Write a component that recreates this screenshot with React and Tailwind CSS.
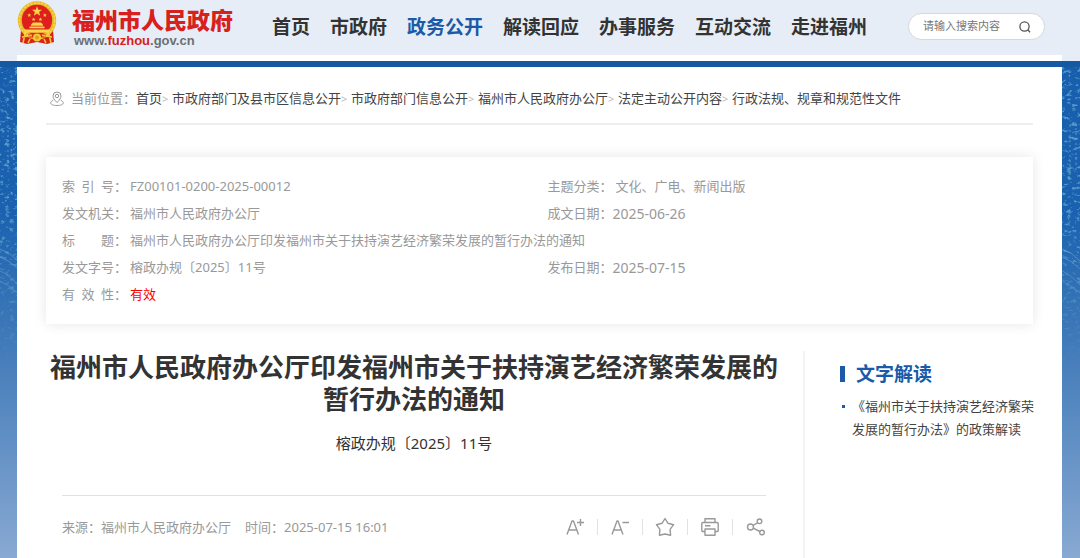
const navItems = [
  '首页',
  '市政府',
  '政务公开',
  '解读回应',
  '办事服务',
  '互动交流',
  '走进福州',
]

const crumbs = [
  '首页',
  '市政府部门及县市区信息公开',
  '市政府部门信息公开',
  '福州市人民政府办公厅',
  '法定主动公开内容',
  '行政法规、规章和规范性文件',
]

function Emblem() {
  return (
    <svg width="40" height="44" viewBox="0 0 40 44" aria-hidden="true" className="shrink-0">
      <path d="M4 29 L3 41 L10 43 L20 41 L30 43 L37 41 L36 29 Z" fill="#d9201c" />
      <circle cx="20" cy="19.5" r="19.2" fill="#e8b828" />
      <circle cx="20" cy="19.5" r="17.6" fill="none" stroke="#f6d84c" strokeWidth="1.6" strokeDasharray="2.4 1.2" />
      <circle cx="20" cy="19" r="15.2" fill="#df1f1d" />
      <path d="M20 5.2l1.3 3.5 3.7.1-2.9 2.3 1 3.6-3.1-2.1-3.1 2.1 1-3.6-2.9-2.3 3.7-.1z" fill="#f8d648" />
      <g fill="#f8d648">
        <path d="M12.2 12.2l.6 1.3 1.4.1-1.1.9.4 1.4-1.3-.8-1.2.8.4-1.4-1.1-.9 1.4-.1z" />
        <path d="M27.8 12.2l.6 1.3 1.4.1-1.1.9.4 1.4-1.3-.8-1.2.8.4-1.4-1.1-.9 1.4-.1z" />
        <path d="M16.6 16.4l.6 1.3 1.4.1-1.1.9.4 1.4-1.3-.8-1.2.8.4-1.4-1.1-.9 1.4-.1z" />
        <path d="M23.4 16.4l.6 1.3 1.4.1-1.1.9.4 1.4-1.3-.8-1.2.8.4-1.4-1.1-.9 1.4-.1z" />
        <path d="M14 23.5l2-2h8l2 2v1.3H14z" />
        <path d="M12.5 25.5h15v1.8h-15z" />
        <path d="M6.5 28.4h27l-1.6 3.4H8.1z" />
      </g>
      <path d="M11 33.5h18v3H11z" fill="#df1f1d" />
      <circle cx="20" cy="36.4" r="4" fill="#f3c93a" />
      <circle cx="20" cy="36.4" r="2" fill="#e0a21d" />
      <path d="M5 36l10-1.5M25 34.5L35 36M8 33l-2 9M32 33l2 9M13 38l-2 4M27 38l2 4" fill="none" stroke="#f3c93a" strokeWidth="1.6" />
    </svg>
  )
}

function SideScene({ id, seed, className }) {
  return (
    <svg width="100%" height="100%" aria-hidden="true" className={className}>
      <defs>
        <linearGradient id={`${id}-sky`} x1="0" y1="0" x2="0" y2="1">
          <stop offset="0" stopColor="#175fac" />
          <stop offset="0.3" stopColor="#1a62b0" />
          <stop offset="0.55" stopColor="#3f79b8" />
          <stop offset="1" stopColor="#88a9d2" />
        </linearGradient>
        <linearGradient id={`${id}-fade`} x1="0" y1="0" x2="0" y2="1">
          <stop offset="0" stopColor="#fff" />
          <stop offset="0.3" stopColor="#fff" />
          <stop offset="0.62" stopColor="#000" />
        </linearGradient>
        <mask id={`${id}-mask`}>
          <rect width="100%" height="100%" fill={`url(#${id}-fade)`} />
        </mask>
        <filter id={`${id}-grain`} x="0" y="0" width="100%" height="100%">
          <feTurbulence type="fractalNoise" baseFrequency="0.2 0.3" numOctaves="4" seed={seed} />
          <feColorMatrix values="0 0 0 0 0.3  0 0 0 0 0.66  0 0 0 0 0.82  5 0 0 0 -2.8" />
        </filter>
      </defs>
      <rect width="100%" height="100%" fill={`url(#${id}-sky)`} />
      <g mask={`url(#${id}-mask)`}>
        <rect width="100%" height="100%" filter={`url(#${id}-grain)`} opacity="0.5" />
        <g fill="none" stroke="#8ec3e4" opacity="0.55">
          <path d="M0 182q10 3 18 12M0 190q9 3 18 12M0 204q8 3 18 14M0 214q9 4 18 12" />
          <path d="M8 58v50M14 56v50" strokeDasharray="2 3" />
        </g>
      </g>
    </svg>
  )
}

function InfoItem({ label, children, className = '' }) {
  return (
    <div className={`flex ${className}`}>
      <dt className="flex shrink-0">
        <span className="w-[52px] [text-align-last:justify]">{label}</span>：
      </dt>
      <dd>{children}</dd>
    </div>
  )
}

function ToolButton({ label, children }) {
  return (
    <button type="button" aria-label={label} className="flex h-4 w-[45px] items-center justify-center">
      <svg
        width="20"
        height="20"
        viewBox="0 0 20 20"
        fill="none"
        stroke="#999"
        strokeWidth="1.4"
        strokeLinejoin="round"
        className="shrink-0"
      >
        {children}
      </svg>
    </button>
  )
}

export default function App() {
  return (
    <div className="flex min-h-screen flex-col bg-white font-['Noto_Sans','Noto_Sans_CJK_SC',sans-serif] text-[13px] text-[#333]">
      {/* HEADER */}
      <header className="bg-[#e6edf6]">
        <div className="flex h-[55px] items-start pr-[35px] pl-[17px]">
          <a href="#" className="flex items-start gap-[15px] pt-px">
            <Emblem />
            <span className="flex w-[162px] flex-col pt-[3px]">
              <span className="font-['Noto_Sans_CJK_SC',sans-serif] text-[23px] leading-[30px] font-black text-[#d8201c]">
                福州市人民政府
              </span>
              <span className="pl-[2px] font-['Liberation_Sans',sans-serif] text-[13px] leading-[14px] font-bold text-[#6b6f73]">
                www.<span className="text-[#d8201c]">fuzhou</span>.gov.cn
              </span>
            </span>
          </a>
          <nav className="ml-[38px] flex h-[54px] items-center gap-5 text-[19px] font-bold whitespace-nowrap">
            {navItems.map((item) => (
              <a key={item} href="#" className={item === '政务公开' ? 'text-[#1a5aa8]' : ''}>
                {item}
              </a>
            ))}
          </nav>
          <form className="mt-[13px] ml-auto flex h-[27px] w-[137px] items-center rounded-full border border-[#d5d8dc] bg-white pr-3 pl-[14px]">
            <input
              type="text"
              aria-label="搜索"
              placeholder="请输入搜索内容"
              className="min-w-0 flex-1 text-[11px] outline-none placeholder:text-[#777]"
            />
            <button type="button" aria-label="搜索">
              <svg width="14" height="14" viewBox="0 0 14 14" fill="none" stroke="#555" strokeWidth="1.3">
                <circle cx="6.5" cy="6.5" r="4.6" />
                <path d="M9.8 9.8l2.2 2.4" />
              </svg>
            </button>
          </form>
        </div>
        <div className="mr-[18px] ml-[17px] h-[6px] bg-white" />
        <div className="h-[6px] bg-[#1559a3]" />
      </header>

      <div className="flex flex-1">
        <div className="relative w-[17px] shrink-0">
          <SideScene id="left" seed="4" className="absolute inset-0" />
        </div>

        <main className="flex min-w-0 flex-1 flex-col px-[29px]">
          {/* BREADCRUMB */}
          <nav className="flex items-center border-b-2 border-[#eee] pt-[21px] pb-[14px] pl-1 leading-[21px] whitespace-nowrap">
            <svg width="14" height="16" viewBox="0 0 14 16" fill="none" stroke="#999" aria-hidden="true">
              <path d="M7 11.500C4.600 9 3 7.200 3 5a4 4 0 0 1 8 0C11 7.200 9.400 9 7 11.500z" />
              <circle cx="7" cy="5" r="1.700" />
              <path d="M3.300 9.200C1.500 10 .7 11 .7 12c0 1.600 2.800 2.500 6.300 2.500s6.300-.9 6.300-2.500c0-1-.8-2-2.600-2.800" />
            </svg>
            <span className="ml-[7px] text-[#999]">当前位置：</span>
            {crumbs.map((crumb, i) => (
              <span key={crumb} className="flex">
                <a href="#" className="text-[#444]">{crumb}</a>
                {i < crumbs.length - 1 && (
                  <span className="w-[10px] text-[11px] text-[#bbb]">&gt;</span>
                )}
              </span>
            ))}
          </nav>

          {/* DOCUMENT INFO */}
          <dl className="mt-8 grid auto-rows-[27px] grid-cols-[61fr_59fr] bg-white px-4 py-4 leading-[27px] text-[#999] shadow-[0_0_12px_rgba(0,0,0,0.1)]">
            <InfoItem label="索引号">
              <span className="ml-[3px]">FZ00101-0200-2025-00012</span>
            </InfoItem>
            <InfoItem label="主题分类">
              <span className="ml-[3px]">文化、广电、新闻出版</span>
            </InfoItem>
            <InfoItem label="发文机关">
              <span className="ml-[3px]">福州市人民政府办公厅</span>
            </InfoItem>
            <InfoItem label="成文日期">
              <span className="block text-sm leading-[27px]">2025-06-26</span>
            </InfoItem>
            <InfoItem label="标题" className="col-span-2">
              <span className="ml-[3px]">
                福州市人民政府办公厅印发福州市关于扶持演艺经济繁荣发展的暂行办法的通知
              </span>
            </InfoItem>
            <InfoItem label="发文字号">
              <span className="ml-[3px]">榕政办规〔2025〕11号</span>
            </InfoItem>
            <InfoItem label="发布日期">
              <span className="block text-sm leading-[27px]">2025-07-15</span>
            </InfoItem>
            <InfoItem label="有效性">
              <span className="ml-[3px] text-[#f00]">有效</span>
            </InfoItem>
          </dl>

          <div className="mt-[27px] flex flex-1">
            {/* ARTICLE */}
            <article className="min-w-0 flex-1 pr-[21px]">
              <h1 className="text-center text-[26px] leading-8 font-bold">
                福州市人民政府办公厅印发福州市关于扶持演艺经济繁荣发展的暂行办法的通知
              </h1>
              <p className="mt-4 text-center text-[15px] leading-6">榕政办规〔2025〕11号</p>
              <div className="mx-4 mt-10 flex items-center justify-between border-t border-[#e2e2e2] pt-[19px] whitespace-nowrap text-[#999]">
                <div className="flex items-center gap-[14px] leading-6">
                  <span>来源：福州市人民政府办公厅</span>
                  <span>时间：2025-07-15 16:01</span>
                </div>
                <div className="-mr-3 flex items-center divide-x divide-[#e2e2e2]">
                  <ToolButton label="放大字体">
                    <path d="M2 17.500L7 4h1.500L13.500 17.500M4 13h7.500M12 5.500h7M15.500 2v7" />
                  </ToolButton>
                  <ToolButton label="缩小字体">
                    <path d="M2 17.500L7 4h1L13 17.500M4 13h7.500M12.500 5.500h6.500" />
                  </ToolButton>
                  <ToolButton label="收藏">
                    <path d="M10 1.500l3 4.800 5.600 1.400-3.500 4.600.5 5.900-5.600-1.200-5.600 1.200.5-5.900L1.400 7.700 7 6.300z" />
                  </ToolButton>
                  <ToolButton label="打印">
                    <path d="M5 5.500V1.800h10v3.700M5 14.500H2.800a1 1 0 0 1-1-1v-7a1 1 0 0 1 1-1h14.400a1 1 0 0 1 1 1v7a1 1 0 0 1-1 1H15M5 12h10v6.200H5zM5 8.700h5.500" />
                  </ToolButton>
                  <ToolButton label="分享">
                    <circle cx="4.500" cy="10" r="3" />
                    <circle cx="13.500" cy="4.300" r="2.300" />
                    <circle cx="16" cy="15.500" r="2.300" />
                    <path d="M7 8.500l4.400-2.700M7.200 11.200l6.600 3.300" />
                  </ToolButton>
                </div>
              </div>
            </article>

            {/* RELATED */}
            <aside className="-mr-1 w-[234px] shrink-0 border-l-2 border-[#f3f3f3] pt-[11px] pl-[35px]">
              <h2 className="flex items-center gap-[11px] text-[19px] leading-6 font-bold text-[#1a5aa8]">
                <span className="h-4 w-[5px] bg-[#1a5aa8]" />
                文字解读
              </h2>
              <ul className="mt-[9px] leading-[23px]">
                <li className="flex gap-[7px]">
                  <span className="mt-[10px] ml-[2px] size-[3px] shrink-0 bg-[#1a5aa8]" />
                  <a href="#" className="text-[#444]">《福州市关于扶持演艺经济繁荣发展的暂行办法》的政策解读</a>
                </li>
              </ul>
            </aside>
          </div>
        </main>

        <div className="relative w-[18px] shrink-0">
          <SideScene id="right" seed="11" className="absolute inset-0" />
        </div>
      </div>
    </div>
  )
}
